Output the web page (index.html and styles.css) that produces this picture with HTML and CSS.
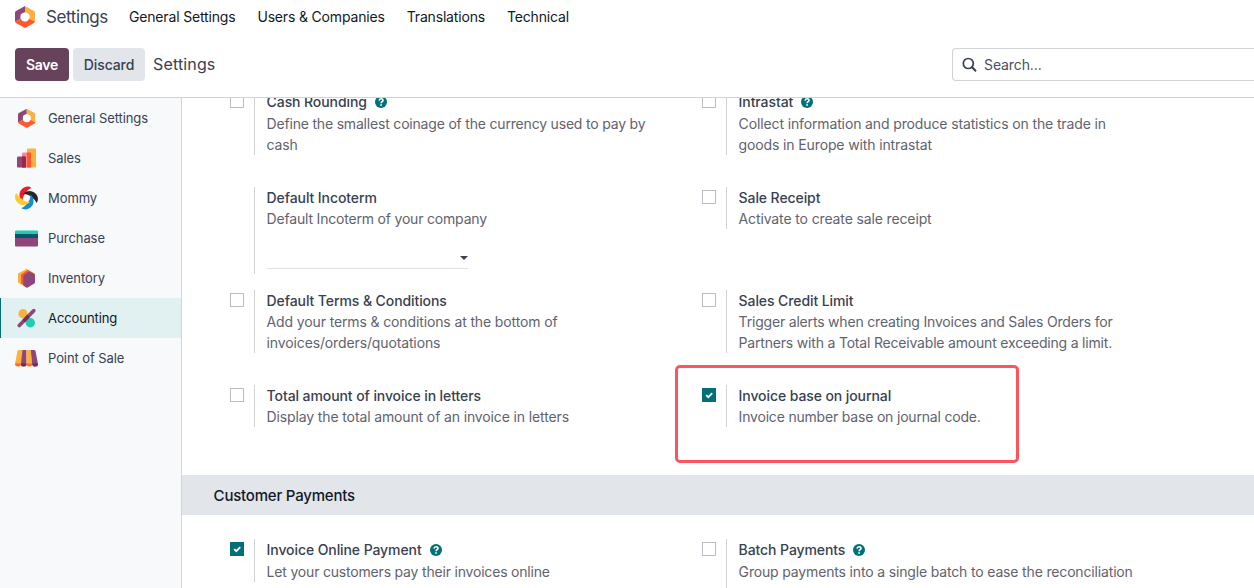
FILE: index.html
```
<!DOCTYPE html>
<html lang="en">
<head>
<meta charset="utf-8">
<title>Settings</title>
<link rel="stylesheet" href="styles.css">
</head>
<body>
<svg class="defs" width="0" height="0">
  <symbol id="hexagon" viewBox="0 0 20 22">
    <path d="M10 0 1 5Q0 5.600 0 6.600V15.800L5.700 12.800V8.400L10 6.500Z" fill="#8f4679"/>
    <path d="M10 0 19 5Q20 5.600 20 6.600V15.800L14.300 12.800V8.400L10 6.500Z" fill="#fbb13f"/>
    <path d="M0 15.800 5.700 12.800 10 15.500 14.300 12.800 20 15.800 19 17 11 21.600Q10 22 9 21.600L1 17Z" fill="#fc5a2e"/>
    <circle cx="10" cy="11" r="4.500" fill="#fff"/>
  </symbol>
  <symbol id="help" viewBox="0 0 12 12">
    <circle cx="6" cy="6" r="6" fill="#017177"/>
    <path d="M4.100 4.600C4.200 2.300 8 2.200 8 4.400 8 5.700 6.100 5.700 6.100 7.200" fill="none" stroke="#fff" stroke-width="1.600"/>
    <path d="M5.200 8.200h1.700v1.600H5.200z" fill="#fff"/>
  </symbol>
  <symbol id="check" viewBox="0 0 14 14">
    <path d="M4.200 7.100 6.300 9.200 10.200 5.200" fill="none" stroke="#fff" stroke-width="1.900"/>
  </symbol>
  <defs>
    <path id="blade" d="M7.500 15.500C3.500 12 3.500 6 7 3 9.500 .2 14 -.3 16.500 2 14 3 12 4.500 11 7 9 8.500 7.500 11 7.500 15.500Z"/>
  </defs>
</svg>

<header class="navbar">
  <svg class="brand-icon"><use href="#hexagon"/></svg>
  <span class="brand">Settings</span>
  <nav class="menu">
    <span>General Settings</span><span>Users &amp; Companies</span><span>Translations</span><span>Technical</span>
  </nav>
</header>

<section class="control">
  <button class="btn save">Save</button>
  <button class="btn discard">Discard</button>
  <span class="crumb">Settings</span>
  <div class="search">
    <svg width="16" height="16" viewBox="0 0 16 16" fill="none" stroke="#374151" stroke-width="1.700"><circle cx="6.300" cy="6.500" r="5"/><path d="m9.800 10 4.200 4.200" stroke-width="2"/></svg>
    <span>Search...</span>
  </div>
</section>

<div class="body">
  <aside class="tabs">
    <div class="tab"><svg viewBox="0 0 24 24"><use href="#hexagon" x="3" y="2.500" width="17.500" height="19.500"/></svg>General Settings</div>
    <div class="tab"><svg viewBox="0 0 24 24"><rect x="12" y="2.500" width="9" height="19" rx="1.200" fill="#fbb13f"/><rect x="7" y="6.500" width="9" height="15" rx="1.200" fill="#fc868b"/><path d="M12 6.500h3a1 1 0 0 1 1 1v14h-4z" fill="#fc5a2e"/><rect x="2" y="10.500" width="9" height="11" rx="1.200" fill="#8f4679"/><path d="M7 10.500h3a1 1 0 0 1 1 1v10H7z" fill="#962b48"/></svg>Sales</div>
    <div class="tab"><svg viewBox="0 0 24 24">
      <use href="#blade" fill="#e3202a"/>
      <use href="#blade" transform="rotate(90 11.500 12)" fill="#26272b"/>
      <use href="#blade" transform="rotate(180 11.500 12)" fill="#168bd2"/>
      <use href="#blade" transform="rotate(270 11.500 12)" fill="#fcca2f"/></svg>Mommy</div>
    <div class="tab"><svg viewBox="0 0 24 24"><path d="M0 11h23v8.500q0 1-1 1H1q-1 0-1-1z" fill="#8f4679"/><path d="M0 7h23v5H0z" fill="#04566b"/><path d="M1 4.500h21q1 0 1 1V8H0V5.500q0-1 1-1z" fill="#1fceb2"/></svg>Purchase</div>
    <div class="tab"><svg viewBox="0 0 24 24"><path d="m11.500 3 8 4.500v9l-8 5-8.500-5v-9z" fill="#fbb13f"/><path d="m13 3.800 6 3.700v9l-6 4.500-7-3.500v-9z" fill="#fc5a2e"/><path d="m14 5.800 5.200 2q.8.400.8 1.300v7.200q0 .7-.7 1.100l-6.600 4Q12 21.800 11.500 21.500L9 20q-.7-.4-.7-1.200v-8.600q0-.8.700-1.200l4-3q.500-.3 1-.2z" fill="#8f4679"/></svg>Inventory</div>
    <div class="tab active"><svg viewBox="0 0 24 24"><circle cx="8" cy="7.700" r="4.600" fill="#fbb13f"/><circle cx="15.300" cy="16.800" r="4.700" fill="#1fceb2"/><path d="M4.300 19.500 18.700 4.700" stroke="#8f4679" stroke-width="3.800" stroke-linecap="round"/><path d="m8.500 15.200 5-5.200" stroke="#6b3260" stroke-width="3.500"/></svg>Accounting</div>
    <div class="tab"><svg viewBox="0 0 24 24"><path d="M4 4h4L6 18.500a2.600 2.200 0 0 1-6-.5L2.500 5q.2-1 1.500-1z" fill="#fbb13f"/><path d="M7.500 4h4v14.500a2.800 2.200 0 0 1-5.700 0z" fill="#8f4679"/><path d="M11.500 4h4.200l1.500 14.500a2.800 2.200 0 0 1-5.700 0z" fill="#fbb13f"/><path d="M15.700 4H19q1.300 0 1.500 1L23 18a2.600 2.200 0 0 1-5.800.5z" fill="#8f4679"/><path d="M.1 17.500H6a2.900 2.600 0 0 1-5.900 0zM11.500 17.500h5.700a2.800 2.600 0 0 1-5.700 0z" fill="#fc6b2e"/><path d="M6 17.500h5.500a2.700 2.600 0 0 1-5.500 0zM17.200 17.500h5.700a2.800 2.600 0 0 1-5.700 0z" fill="#6d2d58"/></svg>Point of Sale</div>
  </aside>

  <main class="content">
    <div class="settings first">
      <div class="setting">
        <i class="box"></i>
        <div class="info"><h3 class="tall">Cash Rounding<svg class="help"><use href="#help"/></svg></h3><p>Define the smallest coinage of the currency used to pay by<br>cash</p></div>
      </div>
      <div class="setting">
        <i class="box"></i>
        <div class="info"><h3 class="tall">Intrastat<svg class="help"><use href="#help"/></svg></h3><p class="loose">Collect information and produce statistics on the trade in<br>goods in Europe with intrastat</p></div>
      </div>
      <div class="setting select-setting">
        <i class="box hidden"></i>
        <div class="info"><h3>Default Incoterm</h3><p>Default Incoterm of your company</p><div class="select"><i class="caret"></i></div></div>
      </div>
      <div class="setting">
        <i class="box"></i>
        <div class="info"><h3>Sale Receipt</h3><p class="loose">Activate to create sale receipt</p></div>
      </div>
      <div class="setting">
        <i class="box"></i>
        <div class="info"><h3>Default Terms &amp; Conditions</h3><p class="loose">Add your terms &amp; conditions at the bottom of<br>invoices/orders/quotations</p></div>
      </div>
      <div class="setting">
        <i class="box"></i>
        <div class="info"><h3>Sales Credit Limit</h3><p>Trigger alerts when creating Invoices and Sales Orders for<br>Partners with a Total Receivable amount exceeding a limit.</p></div>
      </div>
      <div class="setting">
        <i class="box"></i>
        <div class="info"><h3>Total amount of invoice in letters</h3><p class="loose">Display the total amount of an invoice in letters</p></div>
      </div>
      <div class="setting marked">
        <i class="box checked"><svg><use href="#check"/></svg></i>
        <div class="info"><h3>Invoice base on journal</h3><p>Invoice number base on journal code.</p></div>
      </div>
    </div>
    <h2>Customer Payments</h2>
    <div class="settings second">
      <div class="setting">
        <i class="box checked"><svg><use href="#check"/></svg></i>
        <div class="info"><h3 class="tall">Invoice Online Payment<svg class="help"><use href="#help"/></svg></h3><p>Let your customers pay their invoices online</p></div>
      </div>
      <div class="setting last">
        <i class="box"></i>
        <div class="info"><h3 class="tall">Batch Payments<svg class="help"><use href="#help"/></svg></h3><p class="wide">Group payments into a single batch to ease the reconciliation</p></div>
      </div>
    </div>
  </main>
</div>
</body>
</html>
```
FILE: styles.css
```
*, *::after { box-sizing: border-box; }
body {
  margin: 0;
  height: 588px;
  overflow: hidden;
  display: flex;
  flex-direction: column;
  background: #fff;
  color: #374151;
  font: 14px/21px Inter, sans-serif;
}
.defs { display: block; position: absolute; }
.navbar {
  height: 34px;
  flex: none;
  display: flex;
  align-items: center;
  padding-left: 15px;
  white-space: nowrap;
}
.brand-icon { width: 20px; height: 22px; margin-right: 11px; }
.brand { font-size: 17px; letter-spacing: -0.4px; width: 83px; }
.menu { display: flex; gap: 22px; color: #111827; letter-spacing: -0.17px; padding-bottom: 2px; }
.control {
  height: 64px;
  flex: none;
  display: flex;
  align-items: flex-start;
  padding: 14px 0 0 15px;
  border-bottom: 1px solid #d1d3d7;
}
.btn {
  height: 33px;
  border: 0;
  border-radius: 4px;
  padding: 0;
  font: 500 14px/21px Inter, sans-serif;
  letter-spacing: -0.1px;
}
.save { width: 54px; background: #66435a; color: #fff; font-weight: 600; letter-spacing: -0.3px; margin-right: 4px; }
.discard { width: 72px; background: #e2e6ea; color: #374151; margin-right: 8px; }
.crumb { font-size: 16px; line-height: 32px; letter-spacing: 0.15px; }
.search {
  display: flex;
  align-items: center;
  gap: 6px;
  width: 302px;
  height: 33px;
  margin-left: auto;
  padding-left: 9px;
  border: 1px solid #d1d3d7;
  border-right: 0;
  border-radius: 4px 0 0 4px;
  color: #4b505e;
  letter-spacing: -0.1px;
}
.body { flex: 1; min-height: 0; display: flex; }
.tabs {
  width: 182px;
  flex: none;
  background: #f8f9fb;
  border-right: 1px solid #d1d3d7;
  font-size: 13px;
  letter-spacing: -0.08px;
}
.tab {
  height: 40px;
  display: flex;
  align-items: center;
  gap: 9px;
  padding-left: 15px;
}
.tab svg { width: 24px; height: 24px; }
.active {
  background: #e1f0f0;
  border-left: 1px solid #017177;
  padding-left: 14px;
  color: #111827;
}
.content { flex: 1; min-width: 0; overflow: hidden; }
.settings {
  display: grid;
  grid-template-columns: 472px 472px;
  align-items: start;
  padding-left: 48px;
}
.first { margin-top: -7px; padding-bottom: 16px; }
.second { padding-top: 24px; }
.setting { display: flex; margin-bottom: 32px; position: relative; white-space: nowrap; }
.select-setting { margin-bottom: 16px; }
.last { height: 63px; }
.box {
  width: 14px;
  height: 14px;
  flex: none;
  margin: 3px 10px 0 0;
  border: 1px solid #b9bcc2;
}
.hidden { visibility: hidden; }
.checked { background: #017177; border: 0; }
.checked svg { display: block; width: 14px; height: 14px; }
.info { border-left: 1px solid #d1d3d7; padding-left: 11.6px; }
h3 { margin: 0; font-size: 14px; line-height: 21px; font-weight: 500; letter-spacing: -0.09px; display: flex; align-items: center; }
.tall { height: 22px; padding-bottom: 1px; }
.help { width: 12px; height: 12px; margin: 1px 0 0 8px; }
p { margin: 0; color: #5f636f; letter-spacing: -0.19px; }
.loose { letter-spacing: -0.13px; }
.wide { letter-spacing: -0.16px; }
.select {
  width: 201px;
  height: 31px;
  margin: 9px 0 5px;
  border-bottom: 1px solid #dddfe7;
  display: flex;
  justify-content: flex-end;
  align-items: flex-end;
  padding-bottom: 8px;
}
.caret { border: 4px solid transparent; border-top-color: #374151; border-bottom: 0; }
.marked::after {
  content: "";
  position: absolute;
  left: -27px;
  top: -20px;
  width: 344px;
  height: 98px;
  border: 3px solid #fc5560;
  border-radius: 5px;
}
h2 {
  margin: 0;
  height: 40px;
  padding-left: 31.6px;
  background: #e2e6ea;
  color: #111827;
  font-size: 15px;
  line-height: 41px;
  font-weight: 500;
  letter-spacing: -0.2px;
}
```
